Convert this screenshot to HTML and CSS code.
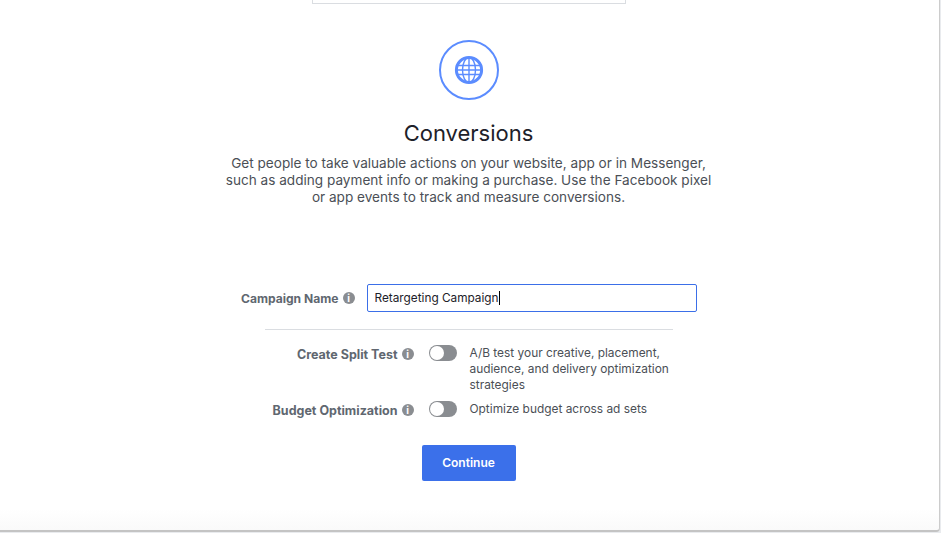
FILE: index.html
```html
<!DOCTYPE html>
<html lang="en">
<head>
  <meta charset="UTF-8" />
  <title>Create Campaign</title>
  <link rel="stylesheet" href="styles.css">
</head>
<body>
  <div class="panel">
    <div class="top-box"></div>

    <div class="objective-icon">
      <svg width="30" height="30" viewBox="0 0 30 30" fill="none" stroke="#5b8cff">
        <circle cx="15" cy="15" r="12.6" stroke-width="3"/>
        <path d="M3 10.5h24M2.5 15h25M3 19.5h24M15 2.5v25" stroke-width="1.4"/>
        <ellipse cx="15" cy="15" rx="6.5" ry="12.5" stroke-width="1.4"/>
      </svg>
    </div>

    <h1 class="title">Conversions</h1>
    <p class="description">
      Get people to take valuable actions on your website, app or in Messenger,<br>
      such as adding payment info or making a purchase. Use the Facebook pixel<br>
      or app events to track and measure conversions.
    </p>

    <div class="name-row">
      <label class="label" for="campaign-name">Campaign Name <span class="info">i</span></label>
      <div class="name-input" id="campaign-name">Retargeting Campaign<span class="caret"></span></div>
    </div>

    <hr class="divider">

    <div class="option-row">
      <div class="label">Create Split Test <span class="info">i</span></div>
      <div class="toggle"><span class="knob"></span></div>
      <div class="option-text">A/B test your creative, placement, audience, and delivery optimization strategies</div>
    </div>
    <div class="option-row">
      <div class="label">Budget Optimization <span class="info">i</span></div>
      <div class="toggle"><span class="knob"></span></div>
      <div class="option-text">Optimize budget across ad sets</div>
    </div>

    <button class="continue-btn">Continue</button>
  </div>
</body>
</html>
```
FILE: styles.css
```css
* {
  box-sizing: border-box;
  margin: 0;
  padding: 0;
}

html, body {
  height: 100%;
  overflow: hidden;
}

body {
  background-color: #e9ebee;
  font-family: 'Inter', 'Liberation Sans', sans-serif;
  color: #1c2b33;
}

.panel {
  width: 940px;
  height: 532px;
  background: linear-gradient(to bottom, #fff 96%, #fafafa);
  border-right: 1px solid #ccc;
  border-bottom: 2px solid #c4c4c4;
  border-radius: 0 0 4px 0;
  display: flex;
  flex-direction: column;
  align-items: center;
}

.top-box {
  width: 314px;
  height: 4px;
  background: #fff;
  border: 1px solid #dadde1;
  border-top: none;
  flex-shrink: 0;
  margin-left: -1px;
}

.objective-icon {
  width: 60px;
  height: 60px;
  margin-top: 36px;
  margin-left: -2px;
  border: 2px solid #5b8cff;
  border-radius: 50%;
  display: flex;
  align-items: center;
  justify-content: center;
}

.title {
  font-size: 22px;
  font-weight: 400;
  line-height: 28px;
  margin-top: 19px;
  margin-left: -2px;
  color: #1d2129;
}

.description {
  font-size: 13.6px;
  line-height: 17px;
  text-align: center;
  color: #4b4f56;
  margin-top: 8px;
  margin-left: -2px;
  white-space: nowrap;
}

.label {
  font-size: 12.5px;
  font-weight: 700;
  color: #606770;
  display: flex;
  align-items: center;
  justify-content: flex-end;
  gap: 4px;
  white-space: nowrap;
}

.info {
  width: 12px;
  height: 12px;
  border-radius: 50%;
  background: #8a8d91;
  color: #fff;
  font-size: 10px;
  font-weight: 700;
  line-height: 12px;
  text-align: center;
}

.name-row {
  display: flex;
  align-items: center;
  width: 458px;
  margin-top: 78px;
  margin-left: -4px;
  gap: 12px;
}

.name-input {
  width: 330px;
  height: 28px;
  border: 1px solid #3b6fe8;
  border-radius: 2px;
  font-size: 11.8px;
  line-height: 26px;
  padding-left: 7px;
  color: #1d2129;
  display: flex;
  align-items: center;
  flex-shrink: 0;
}

.caret {
  width: 1px;
  height: 14px;
  background: #000;
}

.name-row .label {
  flex: 1;
  font-size: 12.1px;
}

.divider {
  width: 408px;
  height: 1px;
  border: none;
  background: #dadde1;
  margin-top: 17px;
  margin-bottom: 15px;
  margin-left: -2px;
}

.option-row {
  display: flex;
  align-items: flex-start;
  width: 408px;
  margin-left: -2px;
  margin-bottom: 8px;
}

.option-row .label {
  width: 149px;
  height: 18px;
  flex-shrink: 0;
}

.toggle {
  width: 28px;
  height: 16px;
  background: #8a8d91;
  border-radius: 8px;
  margin-left: 15px;
  flex-shrink: 0;
  display: flex;
  align-items: center;
}

.knob {
  width: 14px;
  height: 14px;
  margin-left: 1px;
  background: #fff;
  border-radius: 50%;
}

.option-text {
  font-size: 11.9px;
  line-height: 16px;
  color: #4b4f56;
  margin-left: 13px;
  width: 210px;
}

.continue-btn {
  width: 94px;
  height: 36px;
  margin-top: 18px;
  margin-left: -2px;
  padding-bottom: 1px;
  background-color: #3b70ea;
  color: white;
  border: none;
  border-radius: 2px;
  font-family: inherit;
  font-size: 12px;
  font-weight: 600;
}
```
